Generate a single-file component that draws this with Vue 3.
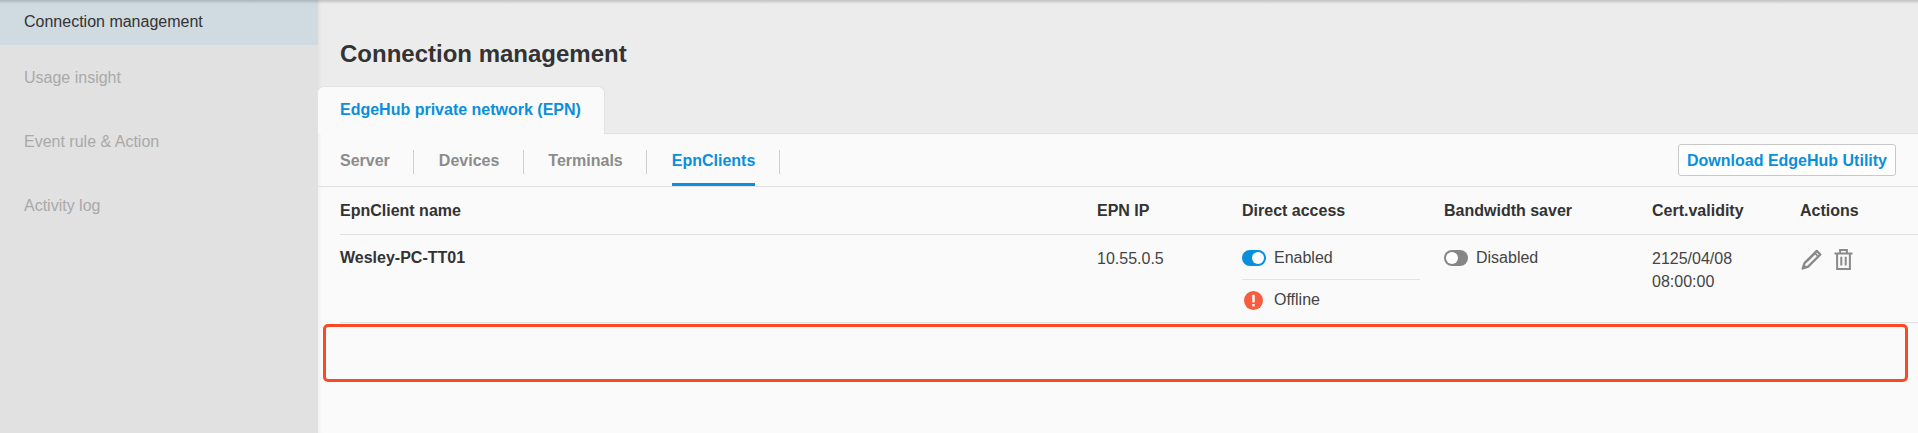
<script setup>
const menu = ["Usage insight", "Event rule & Action", "Activity log"];
const subTabs = ["Server", "Devices", "Terminals", "EpnClients"];
</script>

<template>
  <div class="page">
    <aside class="sidebar">
      <div class="menu-item menu-item--active">Connection management</div>
      <div v-for="item in menu" :key="item" class="menu-item">{{ item }}</div>
    </aside>

    <main class="main">
      <h1 class="title">Connection management</h1>
      <div class="tab-strip">
        <div class="tab">EdgeHub private network (EPN)</div>
      </div>

      <section class="panel">
        <div class="subnav">
          <div class="subtabs">
            <div
              v-for="tab in subTabs"
              :key="tab"
              class="subtab"
              :class="{ 'subtab--active': tab === 'EpnClients' }"
            >
              <span class="subtab__label">{{ tab }}</span>
            </div>
          </div>
          <button type="button" class="download">Download EdgeHub Utility</button>
        </div>

        <div class="table">
          <div class="grid head">
            <div>EpnClient name</div>
            <div>EPN IP</div>
            <div>Direct access</div>
            <div>Bandwidth saver</div>
            <div>Cert.validity</div>
            <div>Actions</div>
          </div>
          <div class="grid row">
            <div class="name">Wesley-PC-TT01</div>
            <div class="ip">10.55.0.5</div>
            <div class="direct">
              <div class="status status--top">
                <span class="toggle toggle--on"></span>
                <span>Enabled</span>
              </div>
              <div class="status status--bottom">
                <svg class="alert" viewBox="0 0 20 20" width="19" height="19">
                  <circle cx="10" cy="10" r="10" fill="#f85c3e" />
                  <rect x="8.7" y="4" width="2.6" height="8" rx="0.8" fill="#fff" />
                  <rect x="8.7" y="13.6" width="2.6" height="2.6" rx="0.6" fill="#fff" />
                </svg>
                <span>Offline</span>
              </div>
            </div>
            <div class="saver">
              <div class="status status--top">
                <span class="toggle"></span>
                <span>Disabled</span>
              </div>
            </div>
            <div class="cert">2125/04/08<br />08:00:00</div>
            <div class="actions">
              <svg class="pencil" viewBox="0 0 20 20" width="21" height="21">
                <path
                  d="M15 1.8 18.4 5.2 6.8 16.8 1.6 18.6 3.4 13.4Z"
                  fill="none"
                  stroke="#8a8a8a"
                  stroke-width="2.2"
                  stroke-linejoin="round"
                />
                <path d="M6 11.6 14.4 3.4" stroke="#8a8a8a" stroke-width="1.4" fill="none" />
                <path d="M12.8 3.6 16.6 7.4" stroke="#8a8a8a" stroke-width="1.6" fill="none" />
                <path d="M1 19.2 2.4 14 6.2 17.8Z" fill="#8a8a8a" />
              </svg>
              <svg viewBox="0 0 18 21" width="19" height="21">
                <path
                  d="M0 4.6H18M5.6 4.4V1.1H12.4V4.4M2.6 4.6V20H15.4V4.6"
                  fill="none"
                  stroke="#8a8a8a"
                  stroke-width="2"
                />
                <path d="M6.8 7.8V16.4M11.2 7.8V16.4" stroke="#8a8a8a" stroke-width="2" />
              </svg>
            </div>
          </div>
        </div>

        <div class="empty-highlight"></div>
      </section>
    </main>
  </div>
</template>

<style>
html,
body {
  margin: 0;
  overflow: hidden;
}
</style>

<style scoped>
.page {
  position: relative;
  display: flex;
  height: 433px;
  overflow: hidden;
  color: #333;
  font-family: "Liberation Sans", Arial, sans-serif;
  font-size: 15px;
}

.page::before {
  content: "";
  position: absolute;
  top: 0;
  left: 0;
  right: 0;
  height: 4px;
  background: linear-gradient(rgba(110, 115, 120, 0.35), rgba(200, 200, 200, 0));
  z-index: 2;
}

.sidebar {
  flex: 0 0 318px;
  background: #e1e1e1;
  color: #a9a9a9;
}

.menu-item {
  display: flex;
  align-items: center;
  box-sizing: border-box;
  height: 64px;
  padding: 2px 0 0 24px;
  font-size: 16px;
}

.menu-item--active {
  height: 45px;
  padding: 0 0 2px 24px;
  background: #cfdae1;
  color: #333;
}

.main {
  flex: 1;
  min-width: 0;
  display: flex;
  flex-direction: column;
  background: #ececec;
  box-shadow: inset 4px 0 4px -3px rgba(0, 0, 0, 0.06);
}

.title {
  margin: 0;
  padding: 39px 0 0 22px;
  height: 47px;
  font-size: 24px;
  line-height: 30px;
  font-weight: 700;
  color: #333;
}

.tab-strip {
  display: flex;
}

.tab {
  position: relative;
  z-index: 1;
  height: 48px;
  line-height: 46px;
  box-sizing: border-box;
  margin: 0 0 -1px -1px;
  padding: 0 23px 0 22px;
  background: #fafafa;
  border: 1px solid #e2e2e2;
  border-bottom: 0;
  border-radius: 7px 7px 0 0;
  color: #0a8fdc;
  font-weight: 700;
  font-size: 16px;
}

.panel {
  flex: 1;
  background: #fafafa;
  border-top: 1px solid #e2e2e2;
  box-shadow: inset 4px 0 4px -3px rgba(0, 0, 0, 0.06);
}

.subnav {
  display: flex;
  align-items: center;
  justify-content: space-between;
  height: 52px;
  padding: 0 22px;
  border-bottom: 1px solid #e2e2e2;
}

.subtabs {
  display: flex;
  align-self: stretch;
  align-items: center;
}

.subtab {
  position: relative;
  display: flex;
  align-items: center;
  align-self: stretch;
  padding-right: 24.5px;
  margin-right: 24.5px;
  color: #8c8c8c;
  font-size: 16px;
  font-weight: 700;
}

.subtab::after {
  content: "";
  position: absolute;
  right: 0;
  top: 16px;
  height: 24px;
  width: 1px;
  background: #cfcfcf;
}

.subtab__label {
  display: flex;
  align-items: center;
  height: 100%;
  box-sizing: border-box;
  padding-top: 5px;
  border-bottom: 3px solid transparent;
}

.subtab--active {
  color: #0a8fdc;
}

.subtab--active .subtab__label {
  border-bottom-color: #0a8fdc;
}

.download {
  height: 32px;
  padding: 2px 8px 0;
  background: #fff;
  border: 1px solid #c9c9c9;
  border-radius: 3px;
  color: #0a8fdc;
  font-family: inherit;
  font-size: 16px;
  font-weight: 700;
  white-space: nowrap;
}

.table {
  margin-left: 22px;
}

.grid {
  display: grid;
  grid-template-columns: 757px 145px 202px 208px 148px 1fr;
}

.head {
  height: 47px;
  align-items: center;
  font-size: 16px;
  font-weight: 700;
  border-bottom: 1px solid #e2e2e2;
}

.row {
  height: 87px;
  border-bottom: 1px solid #e2e2e2;
  color: #444;
}

.name {
  padding-top: 14px;
  font-size: 16px;
  font-weight: 700;
  color: #333;
}

.ip {
  padding-top: 13px;
  font-size: 16px;
  line-height: 22px;
}

.cert {
  padding-top: 12px;
  font-size: 16px;
  line-height: 23px;
}

.direct {
  padding-right: 24px;
}

.status {
  display: flex;
  align-items: center;
  gap: 8px;
  font-size: 16px;
}

.status--top {
  height: 44px;
  padding-top: 2px;
  box-sizing: border-box;
}

.status--bottom {
  height: 40px;
  border-top: 1px solid #e2e2e2;
  gap: 11px;
  padding-left: 2px;
}

.toggle {
  position: relative;
  display: block;
  width: 24px;
  height: 16px;
  border-radius: 8px;
  background: #868686;
}

.toggle::after {
  content: "";
  position: absolute;
  left: 2px;
  top: 2px;
  width: 12px;
  height: 12px;
  border-radius: 50%;
  background: #fff;
}

.toggle--on {
  background: #0a8fdc;
}

.toggle--on::after {
  left: 10px;
}

.alert {
  display: block;
}

.actions {
  display: flex;
  gap: 12px;
  padding: 14px 0 0 1px;
  align-items: flex-start;
}

.actions svg {
  display: block;
}

.pencil {
  margin-top: 0;
}

.empty-highlight {
  height: 52px;
  margin: 1px 10px 0 5px;
  border: 3px solid #f94a25;
  border-radius: 5px;
}
</style>
